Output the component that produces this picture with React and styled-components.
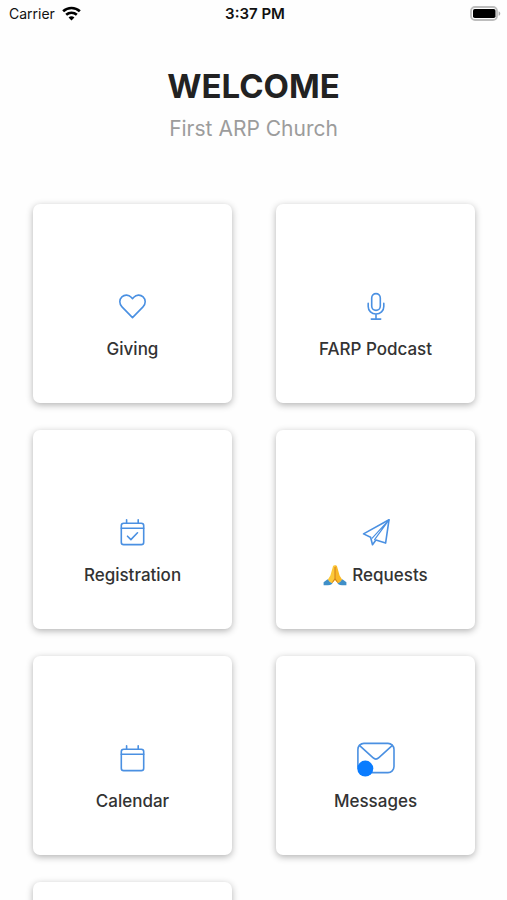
import React from 'react';
import styled, { createGlobalStyle } from 'styled-components';

const GlobalStyle = createGlobalStyle`
  * {
    box-sizing: border-box;
  }
  body {
    margin: 0;
    background: #fefefe;
    font-family: Inter, "Liberation Sans", sans-serif;
    color: #2a2a2a;
  }
`;

const Screen = styled.div`
  height: 100vh;
  overflow-y: auto;
  scrollbar-width: none;
`;

const StatusBar = styled.div`
  display: grid;
  grid-template-columns: 1fr auto 1fr;
  align-items: center;
  height: 28px;
  padding: 0 6px 0 9px;
  line-height: 28px;
  color: #111;
`;

const Carrier = styled.div`
  display: flex;
  align-items: center;
  gap: 7px;
  font-size: 14px;

  svg {
    margin-bottom: 2px;
  }
`;

const Time = styled.span`
  font-size: 15px;
  font-weight: 600;
`;

const Battery = styled.div`
  display: flex;
  justify-content: flex-end;
  padding-bottom: 2px;
`;

const Header = styled.header`
  padding: 36px 0 59px;
  text-align: center;

  h1 {
    margin: 0;
    font-size: 33px;
    line-height: 44px;
    font-weight: 700;
    color: #222;
  }
  p {
    margin: 5px 0 0;
    font-size: 21px;
    line-height: 32px;
    color: #9c9c9c;
  }
`;

const Grid = styled.nav`
  display: grid;
  grid-template-columns: 1fr 1fr;
  gap: 27px 44px;
  padding: 0 32px 27px 33px;
`;

const Card = styled.a`
  display: flex;
  flex-direction: column;
  align-items: center;
  justify-content: flex-end;
  gap: 15px;
  aspect-ratio: 1;
  padding-bottom: 42px;
  border-radius: 7px;
  background: #fff;
  box-shadow: 0 2px 7px rgba(0, 0, 0, 0.3);
  color: #333;
  text-decoration: none;
`;

const IconSlot = styled.div`
  display: flex;
  align-items: center;
  justify-content: center;
  height: 32px;

  svg {
    overflow: visible;
    fill: none;
    stroke: #4a90e2;
    stroke-linecap: round;
    stroke-linejoin: round;
    stroke-width: 1.6;
  }
`;

const Label = styled.span`
  display: flex;
  align-items: center;
  gap: 5px;
  font-size: 17px;
  line-height: 24px;
  font-weight: 500;
`;

const Wifi = () => (
  <svg width="19" height="15" viewBox="0 0 20 15" fill="none" stroke="#000" strokeWidth="2.8">
    <path d="M1.2 5.2C6.2.6 13.8.6 18.8 5.2" />
    <path d="M4.4 8.8c3.2-2.8 8-2.8 11.2 0" />
    <path d="M10 14.8 6.9 11.6c1.8-1.5 4.4-1.5 6.2 0z" fill="#000" stroke="none" />
  </svg>
);

const BatteryIcon = () => (
  <svg width="31" height="15" viewBox="0 0 31 15">
    <rect x="1" y="1" width="26" height="13" rx="4" fill="#fff" stroke="#bdbdbd" strokeWidth="1.8" />
    <rect x="3" y="3" width="22.5" height="9" rx="1.8" fill="#000" />
    <path d="M28.6 5.2c2.2.8 2.2 3.8 0 4.6z" fill="#aaa" />
  </svg>
);

const Heart = () => (
  <svg width="28" height="28" viewBox="0 0 28 28">
    <path d="M13.5 25.6 3 14.9C.1 12 .1 7.5 2.9 4.9 5.6 2.3 9.7 2.6 12.2 5.2l1.3 1.5 1.3-1.5c2.5-2.6 6.6-2.9 9.3-.3 2.8 2.6 2.8 7.1-.1 10z" />
  </svg>
);

const Mic = () => (
  <svg width="28" height="28" viewBox="0 0 28 28">
    <rect x="9.7" y="1.6" width="8.6" height="16.8" rx="4.3" />
    <path d="M6.2 11.4v3c0 4.6 3.4 7.6 7.8 7.6s7.8-3 7.8-7.6v-3M14 22v5M9.3 27.1h9.4" />
  </svg>
);

const CalendarIcon = ({ checked }) => (
  <svg width="28" height="28" viewBox="0 0 28 28">
    <rect x="2.3" y="5.2" width="22.4" height="21.4" rx="2.4" />
    <path d="M2.3 10.2h22.4M7.6 1.7v3.5M19.2 1.7v3.5" />
    {checked && <path d="m8.5 18.2 3.4 3.4 6.6-6.8" />}
  </svg>
);

const Plane = () => (
  <svg width="28" height="28" viewBox="0 0 28 28">
    <path d="M27 1.8 1.5 15.9l7.1 3.4 1.9 7.4 3.4-4.6 9.7 3z" />
    <path d="M27 1.8 10.2 20.1M27 1.8 12.6 21.6" strokeWidth="1.2" />
  </svg>
);

const Mail = () => (
  <svg width="38" height="32" viewBox="0 0 38 32">
    <rect x=".9" y="1.4" width="36.1" height="29.2" rx="6" />
    <path d="m2.4 3.4 13.5 12.3c1.9 1.7 4.1 1.7 6 0L35.4 3.4" />
    <circle cx="8.3" cy="26.6" r="8" style={{ fill: '#0a7cff', stroke: 'none' }} />
  </svg>
);

const Pray = () => (
  <svg width="24" height="24" viewBox="0 0 24 24" role="img" aria-label="Folded hands">
    <path d="M12 2.4c-1-.7-2 .2-2.2 1.6L7.4 12.6 4.6 17l4 3.8 3.4-3.6z" fill="#fdc93a" />
    <path d="M12 2.4c1-.7 2 .2 2.2 1.6l2.4 8.6 2.8 4.4-4 3.8-3.4-3.6z" fill="#f9b827" />
    <path d="M12 4v11.5L9.4 19.6M12 15.5l2.6 4.1" fill="none" stroke="#cf7d1c" strokeWidth="1" />
    <path d="M4.6 16.2q2.2 3.8 5 4.2Q7.6 22.6.6 22.2v-3z" fill="#3f8fc8" />
    <path d="M19.4 16.2q-2.2 3.8-5 4.2 2 2.2 9 1.8v-3z" fill="#3f8fc8" />
  </svg>
);

const items = [
  { label: 'Giving', href: '#giving', icon: <Heart /> },
  { label: 'FARP Podcast', href: '#podcast', icon: <Mic /> },
  { label: 'Registration', href: '#registration', icon: <CalendarIcon checked /> },
  { label: 'Requests', href: '#requests', icon: <Plane />, emoji: <Pray /> },
  { label: 'Calendar', href: '#calendar', icon: <CalendarIcon /> },
  { label: 'Messages', href: '#messages', icon: <Mail /> },
];

const App = () => {
  return (
    <Screen>
      <GlobalStyle />
      <StatusBar>
        <Carrier>Carrier <Wifi /></Carrier>
        <Time>3:37 PM</Time>
        <Battery><BatteryIcon /></Battery>
      </StatusBar>
      <Header>
        <h1>WELCOME</h1>
        <p>First ARP Church</p>
      </Header>
      <Grid>
        {items.map((item) => (
          <Card key={item.label} href={item.href}>
            <IconSlot>{item.icon}</IconSlot>
            <Label>{item.emoji}{item.label}</Label>
          </Card>
        ))}
        <Card as="div" />
      </Grid>
    </Screen>
  );
};

export default App;
